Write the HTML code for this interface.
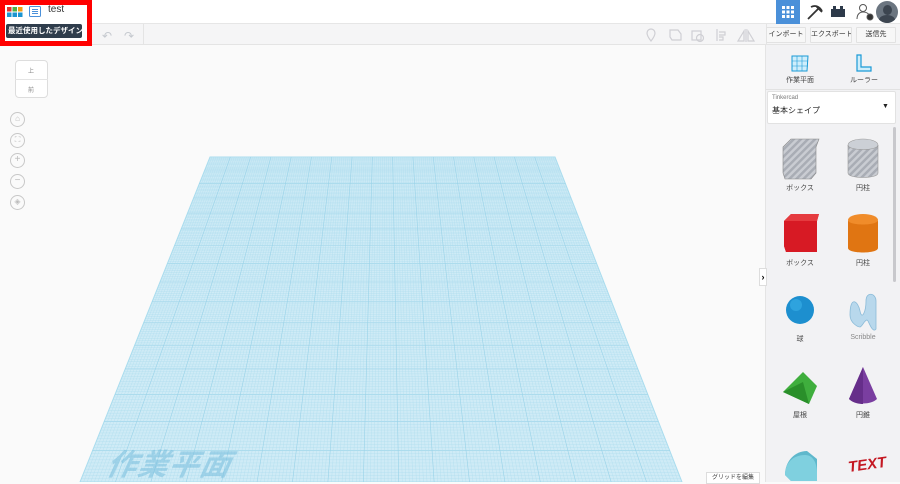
<!DOCTYPE html>
<html><head><meta charset="utf-8">
<style>
*{box-sizing:border-box;margin:0;padding:0}
body{width:900px;height:482px;overflow:hidden;background:#fafafa;font-family:"Liberation Sans","Noto Sans CJK JP",sans-serif;position:relative}
.abs{position:absolute}
.btn{position:absolute;top:27px;height:16px;border:1px solid #e2e2e2;background:#f7f7f7;font-size:7px;color:#333;text-align:center;line-height:14px;border-radius:1px;white-space:nowrap;overflow:hidden}
.lab{position:absolute;font-size:7px;color:#444;text-align:center;width:60px}
.circ{position:absolute;left:10px;width:15px;height:15px;border:1px solid #c8c8c8;border-radius:50%;color:#bbb;font-size:10px;line-height:12px;text-align:center}
</style></head><body>
<div class="abs" style="left:0;top:0;width:900px;height:24px;background:#fff;border-bottom:1px solid #e6e6e6"></div>
<div class="abs" style="left:0;top:24px;width:900px;height:21px;background:#f5f5f6;border-bottom:1px solid #e4e4e4"></div>
<div class="abs" style="left:143px;top:24px;width:1px;height:21px;background:#e4e4e4"></div>
<div class="abs" style="left:102px;top:29px;color:#c5c9cf;font-size:12px">↶</div>
<div class="abs" style="left:124px;top:29px;color:#c5c9cf;font-size:12px">↷</div>
<svg class="abs" style="left:640px;top:26px" width="125" height="18" fill="none" stroke="#cfcfd4" stroke-width="1.2">
<path d="M11 3a4 4 0 0 1 4 4c0 3-4 8-4 8s-4-5-4-8a4 4 0 0 1 4-4z"/>
<path d="M30 4h8l3 4v6h-9l-2-3z"/>
<rect x="52" y="5" width="9" height="9"/><circle cx="60" cy="12" r="3.5"/>
<path d="M77 3v12M79 6h6v3h-6M79 11h4v3h-4"/>
<path d="M106 3v13M104 15l-6 0 6-10zM108 15l6 0-6-10z"/></svg>
<div class="abs" style="left:766px;top:24px;width:1px;height:21px;background:#e4e4e4"></div>
<div class="btn" style="left:766px;width:40px">インポート</div>
<div class="btn" style="left:810px;width:42px">エクスポート</div>
<div class="btn" style="left:856px;width:40px">送信先</div>
<div class="abs" style="left:776px;top:0;width:24px;height:24px;background:#4a90d9"></div>
<svg class="abs" style="left:782px;top:6px" width="12" height="12"><g fill="#fff"><rect x="0" y="0" width="3" height="3"/><rect x="4.5" y="0" width="3" height="3"/><rect x="9" y="0" width="3" height="3"/><rect x="0" y="4.5" width="3" height="3"/><rect x="4.5" y="4.5" width="3" height="3"/><rect x="9" y="4.5" width="3" height="3"/><rect x="0" y="9" width="3" height="3"/><rect x="4.5" y="9" width="3" height="3"/><rect x="9" y="9" width="3" height="3"/></g></svg>
<svg class="abs" style="left:806px;top:4px" width="18" height="16" fill="none" stroke="#333" stroke-width="1.8"><path d="M2 15L12 5"/><path d="M5 3c4-2 8-1 11 4M10 2l6 6" /></svg>
<svg class="abs" style="left:831px;top:6px" width="14" height="11"><rect x="0" y="3" width="14" height="8" fill="#2d3a4a"/><rect x="2" y="0" width="3" height="4" fill="#2d3a4a"/><rect x="9" y="0" width="3" height="4" fill="#2d3a4a"/></svg>
<svg class="abs" style="left:856px;top:3px" width="18" height="18" fill="none" stroke="#555" stroke-width="1"><circle cx="7" cy="5" r="3.5"/><path d="M1 16c0-5 3-7 6-7s5 1 6 3"/><circle cx="14" cy="14" r="3" fill="#333"/></svg>
<div class="abs" style="left:876px;top:1px;width:22px;height:22px;border-radius:50%;background:#6b7580;overflow:hidden"><div style="margin:4px auto 0;width:9px;height:10px;border-radius:50%;background:#3c4550"></div><div style="margin:0 auto;width:16px;height:10px;border-radius:50% 50% 0 0;background:#3c4550"></div></div>
<div class="abs" style="left:0;top:0;width:92px;height:46px;background:#fff;border:5px solid #f00"></div>
<svg class="abs" style="left:7px;top:7px" width="16" height="16"><rect x="0" y="0" width="4.5" height="4.5" fill="#e5322d"/><rect x="5.5" y="0" width="4.5" height="4.5" fill="#4cb048"/><rect x="11" y="0" width="4.5" height="4.5" fill="#f39c12"/><rect x="0" y="5.5" width="4.5" height="4.5" fill="#1b95d1"/><rect x="5.5" y="5.5" width="4.5" height="4.5" fill="#1b95d1"/><rect x="11" y="5.5" width="4.5" height="4.5" fill="#1b95d1"/></svg>
<svg class="abs" style="left:29px;top:6px" width="12" height="11" fill="none" stroke="#4a90d9" stroke-width="1"><rect x="0.5" y="0.5" width="11" height="10" rx="1"/><path d="M3 3.5h6M3 5.5h6M3 7.5h6"/></svg>
<div class="abs" style="left:48px;top:4px;font-size:10px;color:#333">test</div>
<div class="abs" style="left:6px;top:24px;width:76px;height:14px;background:#2f3d4c;border-radius:2px;color:#fff;font-size:7.5px;font-weight:bold;line-height:14px;padding-left:2px;white-space:nowrap">最近使用したデザイン</div>
<div class="abs" style="left:15px;top:60px;width:33px;height:38px;border:1px solid #ddd;border-radius:4px;background:#fff"></div>
<div class="abs" style="left:15px;top:79px;width:33px;height:1px;background:#e4e4e4"></div>
<div class="abs" style="left:28px;top:66px;font-size:6px;color:#888">上</div>
<div class="abs" style="left:28px;top:85px;font-size:6px;color:#888">前</div>
<div class="circ" style="top:112px;font-size:8px">⌂</div>
<div class="circ" style="top:133px;font-size:8px">⛶</div>
<div class="circ" style="top:153px">+</div>
<div class="circ" style="top:174px">−</div>
<div class="circ" style="top:195px;font-size:8px">◈</div>
<svg id="g" class="abs" style="left:0;top:0" width="765" height="482"></svg>
<div class="abs" style="left:108px;top:440px;font-size:30px;font-weight:bold;font-style:italic;color:rgba(120,190,220,0.55);letter-spacing:1px;transform:skewX(-12deg)">作業平面</div>
<div class="abs" style="left:706px;top:472px;width:54px;height:12px;background:#fff;border:1px solid #ddd;font-size:6px;color:#444;text-align:center;line-height:10px">グリッドを編集</div>
<div class="abs" style="left:765px;top:45px;width:135px;height:437px;background:#f2f2f4;border-left:1px solid #e4e4e4"></div>
<svg class="abs" style="left:791px;top:54px" width="18" height="18" fill="#cfeefb" stroke="#1a9ad6" stroke-width="1"><path d="M1 2l16 0-1 15-15 0z"/><path d="M6 2v15M11 2v15M1 7h16M1 12h16" stroke-width=".6"/></svg>
<div class="lab" style="left:770px;top:75px">作業平面</div>
<svg class="abs" style="left:856px;top:54px" width="16" height="18" fill="#cfeefb" stroke="#1a9ad6" stroke-width="1.2"><path d="M1 1h4v12h10v4H1z"/></svg>
<div class="lab" style="left:834px;top:75px">ルーラー</div>
<div class="abs" style="left:766px;top:89px;width:134px;height:1px;background:#e2e2e2"></div>
<div class="abs" style="left:767px;top:91px;width:129px;height:33px;background:#fff;border:1px solid #e2e2e2;border-radius:2px"></div>
<div class="abs" style="left:772px;top:95px;font-size:6px;color:#777">Tinkercad</div>
<div class="abs" style="left:772px;top:105px;font-size:8px;color:#222">基本シェイプ</div>
<div class="abs" style="left:882px;top:103px;font-size:7px;color:#222">▼</div>
<div class="abs" style="left:893px;top:127px;width:3px;height:155px;background:#c8c8cc;border-radius:2px"></div>
<div class="abs" style="left:759px;top:268px;width:8px;height:18px;background:#fff;border:1px solid #ddd;font-size:9px;line-height:16px;font-weight:bold;text-align:center">›</div>
<svg class="abs" style="left:775px;top:135px" width="120" height="347">
<defs><pattern id="st" width="5" height="5" patternUnits="userSpaceOnUse" patternTransform="rotate(45)"><rect width="5" height="5" fill="#c9ccd2"/><rect width="2.5" height="5" fill="#a9adb5"/></pattern></defs>
<path d="M8 12l8-8h28l-3 8v26l-5 6H10l-2-6z" fill="url(#st)" stroke="#888" stroke-width=".6"/>
<ellipse cx="88" cy="10" rx="15" ry="6" fill="#ccd0d6" stroke="#999" stroke-width=".6"/><path d="M73 10v28c0 6 30 6 30 0V10c0 6-30 6-30 0z" fill="url(#st)" stroke="#999" stroke-width=".6"/>
<path d="M9 86l7-7h28l-2 7v25l-6 6H11l-2-6z" fill="#c8141e"/><path d="M9 86h33v31H11l-2-6z" fill="#d71a24"/><path d="M9 86l7-7h28l-2 7z" fill="#e53b3f"/>
<ellipse cx="88" cy="85" rx="15" ry="6" fill="#f08c2a"/><path d="M73 85v28c0 6 30 6 30 0V85c0 6-30 6-30 0z" fill="#e07512"/>
<circle cx="25" cy="175" r="14" fill="#1d8fcf"/><circle cx="21" cy="170" r="6" fill="#3ab0e8" opacity=".6"/>
<path d="M75 180c0-20 8-14 10-4s6 0 6-10 10-8 10 0v28c-3 4-6-4-8-8s-6 6-8 6-10-4-10-12z" fill="#b8d8ec" stroke="#8bbbd8" stroke-width=".8"/>
<path d="M8 257l20-20 14 14-8 18z" fill="#3fae3d"/><path d="M8 257l26 12-6-22z" fill="#2a8f2a"/>
<path d="M88 232l14 32c-6 6-22 6-28 0z" fill="#7a3ea0"/><path d="M88 232l-14 32c4 4 10 5 14 5z" fill="#662e8a"/>
<path d="M10 340c0-14 10-24 22-24l10 8v22H16z" fill="#5fb8cc"/><path d="M10 340c0-12 8-20 20-20 8 0 12 8 12 18v8H16z" fill="#7fd0df"/>
<text x="73" y="335" font-family="Liberation Sans" font-weight="bold" font-style="italic" font-size="15" fill="#c41822" transform="rotate(-8 88 330)">TEXT</text>
</svg>
<div class="lab" style="left:770px;top:183px">ボックス</div>
<div class="lab" style="left:833px;top:183px">円柱</div>
<div class="lab" style="left:770px;top:258px">ボックス</div>
<div class="lab" style="left:833px;top:258px">円柱</div>
<div class="lab" style="left:770px;top:334px">球</div>
<div class="lab" style="left:833px;top:334px;color:#888">Scribble</div>
<div class="lab" style="left:770px;top:410px">屋根</div>
<div class="lab" style="left:833px;top:410px">円錐</div>
<script>
(function(){
var s=document.getElementById('g'),h='';
var T=157,B=482,tl=210,tr=555,bl=80,br=682;
h+='<path d="M'+tl+' '+T+'L'+tr+' '+T+'L'+br+' '+B+'L'+bl+' '+B+'Z" fill="#cfebf6" stroke="#a9dcee" stroke-width="1"/>';
function Y(u){var a=0.6;return T+(B-T)*u/(1+a*(1-u));}
function xl(y){return tl+(bl-tl)*(y-T)/(B-T);}
function xr(y){return tr+(br-tr)*(y-T)/(B-T);}
var NR=160,NC=170;
for(var i=1;i<NR;i++){var y=Y(i/NR),maj=i%10==0;
h+='<line x1="'+xl(y)+'" y1="'+y+'" x2="'+xr(y)+'" y2="'+y+'" stroke="'+(maj?'#98d2e8':'#aedcee')+'" stroke-width="'+(maj?0.6:0.35)+'"/>';}
for(var j=1;j<NC;j++){var f=j/NC,maj=j%10==0;
var x1=tl+(tr-tl)*f,x2=bl+(br-bl)*f;
h+='<line x1="'+x1+'" y1="'+T+'" x2="'+x2+'" y2="'+B+'" stroke="'+(maj?'#98d2e8':'#aedcee')+'" stroke-width="'+(maj?0.6:0.35)+'"/>';}
s.innerHTML=h;})();
</script>
</body></html>
